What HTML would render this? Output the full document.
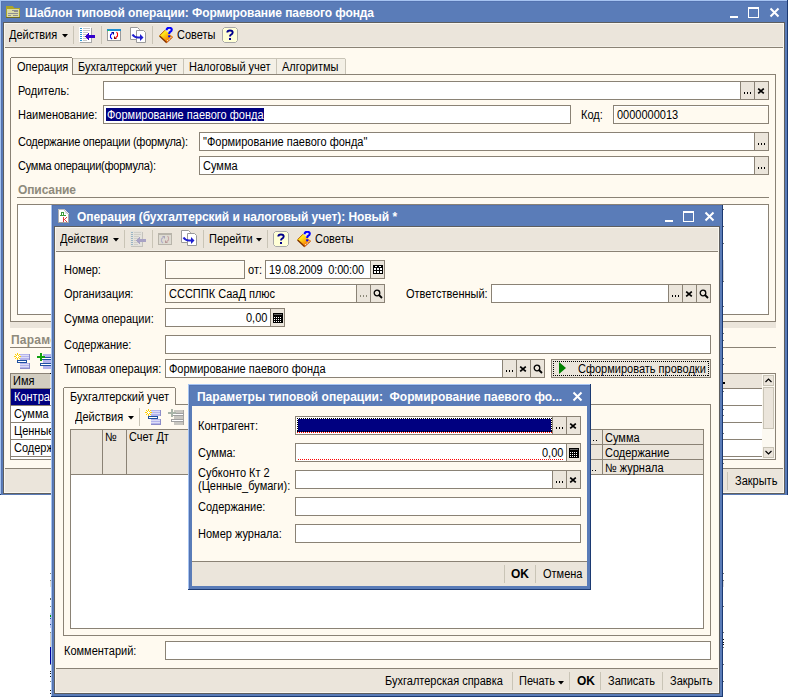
<!DOCTYPE html><html><head><meta charset="utf-8"><style>
html,body{margin:0;padding:0;background:#fff;}
#r{position:relative;width:788px;height:698px;overflow:hidden;background:#fff;font-family:"Liberation Sans",sans-serif;font-size:12px;color:#000}
.a{position:absolute;box-sizing:border-box}
.t{position:absolute;line-height:13px;white-space:nowrap;font-size:12px;transform:scaleX(0.917);transform-origin:0 0}
svg.a{display:block}
</style></head><body><div id="r">
<div class="a" style="left:0px;top:0px;width:788px;height:495px;background:#5a7cb8;"></div>
<div class="a" style="left:1px;top:1px;width:1px;height:494px;background:#5473b0;"></div>
<div class="a" style="left:1px;top:1px;width:787px;height:1px;background:#5473b0;"></div>
<div class="a" style="left:0px;top:0px;width:1px;height:495px;background:#a6c4f2;"></div>
<div class="a" style="left:0px;top:0px;width:788px;height:1px;background:#a6c4f2;"></div>
<div class="a" style="left:787px;top:0px;width:1px;height:495px;background:#1c3a72;"></div>
<div class="a" style="left:0px;top:494px;width:788px;height:1px;background:#1c3a72;"></div>
<div class="t" style="left:25px;top:7px;letter-spacing:-0.081px;font-weight:bold;transform:none;color:#fff;">Шаблон типовой операции: Формирование паевого фонда</div>
<svg class="a" style="left:6px;top:6px;shape-rendering:crispEdges" width="14" height="12" viewBox="0 0 14 12"><path d="M0 0 H6 L8 2 H14 V12 H0 Z" fill="#aca42a"/><rect x="1" y="3" width="12" height="8" fill="#dcdba6"/><rect x="6" y="4" width="6" height="1" fill="#8e8e92"/><rect x="8" y="5" width="4" height="1" fill="#8e8e92"/><rect x="2" y="7" width="10" height="1" fill="#8e8e92"/><rect x="2" y="9" width="3" height="1" fill="#8e8e92"/><rect x="7" y="9" width="5" height="1" fill="#8e8e92"/><rect x="0" y="11" width="14" height="1" fill="#6e6a20"/></svg>
<div class="a" style="left:730px;top:16px;width:8px;height:2px;background:#fff;"></div>
<div class="a" style="left:748px;top:7px;width:11px;height:2px;background:#fff;"></div>
<div class="a" style="left:748px;top:7px;width:1px;height:11px;background:#fff;"></div>
<div class="a" style="left:758px;top:7px;width:1px;height:11px;background:#fff;"></div>
<div class="a" style="left:748px;top:17px;width:11px;height:1px;background:#fff;"></div>
<svg class="a" style="left:769px;top:7px" width="11" height="11" viewBox="0 0 11 11"><path d="M1.5 1.5 L9.5 9.5 M9.5 1.5 L1.5 9.5" stroke="#fff" stroke-width="2"/></svg>
<div class="a" style="left:3px;top:22px;width:782px;height:472px;background:#5e5e5e;"></div>
<div class="a" style="left:4px;top:23px;width:780px;height:470px;background:#fffaf0;"></div>
<div class="a" style="left:4px;top:23px;width:780px;height:24px;background:#ebe5db;"></div>
<div class="a" style="left:4px;top:47px;width:780px;height:1px;background:#8a8275;"></div>
<div class="t" style="left:9px;top:29px;">Действия</div>
<svg class="a" style="left:62px;top:34px" width="6" height="4" viewBox="0 0 6 4"><path d="M0 0H6L3 3.5Z" fill="#000"/></svg>
<div class="a" style="left:73px;top:26px;width:1px;height:18px;background:#c9c4b6;"></div>
<div class="a" style="left:101px;top:26px;width:1px;height:18px;background:#c9c4b6;"></div>
<div class="a" style="left:152px;top:26px;width:1px;height:18px;background:#c9c4b6;"></div>
<div class="t" style="left:177px;top:29px;">Советы</div>
<svg class="a" style="left:79px;top:27px;shape-rendering:crispEdges" width="17" height="17" viewBox="0 0 17 17"><rect x="1" y="1" width="12" height="15" fill="#a8a8a8"/><rect x="0" y="0" width="12" height="15" fill="#ffffff"/><rect x="1" y="1" width="2" height="1" fill="#2a9ad8"/><rect x="4" y="1" width="7" height="1" fill="#c8c8c8"/><rect x="1" y="3" width="2" height="1" fill="#2a9ad8"/><rect x="4" y="3" width="7" height="1" fill="#c8c8c8"/><rect x="1" y="5" width="2" height="1" fill="#2a9ad8"/><rect x="4" y="5" width="5" height="1" fill="#c8c8c8"/><rect x="1" y="7" width="2" height="1" fill="#2a9ad8"/><rect x="4" y="7" width="4" height="1" fill="#c8c8c8"/><rect x="1" y="9" width="2" height="1" fill="#2a9ad8"/><rect x="4" y="9" width="4" height="1" fill="#c8c8c8"/><rect x="1" y="11" width="2" height="1" fill="#2a9ad8"/><rect x="4" y="11" width="4" height="1" fill="#c8c8c8"/><rect x="1" y="13" width="2" height="1" fill="#2a9ad8"/><rect x="4" y="13" width="4" height="1" fill="#c8c8c8"/><path d="M6 9.5 L10 6 V8 H16 V11 H10 V13 Z" fill="#3300cc"/></svg>
<svg class="a" style="left:107px;top:29px;" width="14" height="12" viewBox="0 0 14 12"><rect x="0.5" y="0.5" width="13" height="11" fill="#ffffff" stroke="#9a9a9a"/><rect x="0" y="0" width="14" height="2" fill="#1e8fd0"/><rect x="1" y="1" width="1" height="1" fill="#20e020"/><path d="M4 3 H7 V6 Z" fill="#000090"/><path d="M5 4.5 L3.5 6 V8.5 L5 10" stroke="#0000ff" stroke-width="1.1" fill="none"/><path d="M9.5 3 L10.5 4.5 V7 L9 8.5" stroke="#ff0000" stroke-width="1.1" fill="none"/><path d="M7 7 V10 H10 Z" fill="#900000"/></svg>
<svg class="a" style="left:130px;top:27px;" width="17" height="17" viewBox="0 0 17 17"><path d="M0.5 0.5 H7.5 L9.5 2.5 V12.5 H0.5 Z" fill="#fff" stroke="#9a9a9a"/><path d="M6.5 3.5 H13.5 L15.5 5.5 V15.5 H6.5 Z" fill="#fff" stroke="#9a9a9a"/><path d="M2.5 7.5 Q4.5 10.5 8 10.5 H11" stroke="#2020d0" stroke-width="2.2" fill="none"/><path d="M10 7 L13.5 10.5 L10 14 Z" fill="#2020d0"/></svg>
<svg class="a" style="left:159px;top:27px;" width="15" height="17" viewBox="0 0 15 17"><defs><linearGradient id="bk159" x1="0.2" y1="0.2" x2="0.8" y2="0.9"><stop offset="0" stop-color="#ffff20"/><stop offset="0.5" stop-color="#ffb010"/><stop offset="1" stop-color="#f06000"/></linearGradient></defs><path d="M6 3 L0 9 L7.5 16 L14 10 Z" fill="url(#bk159)"/><path d="M0.6 9 L7.5 15.4" stroke="#803000" stroke-width="1.4"/><path d="M0.6 8.6 L6 3.2" stroke="#c05000" stroke-width="1"/><path d="M8.3 14.2 L13 9.8" stroke="#fff" stroke-width="1.1" stroke-dasharray="1.2 1"/><path d="M13.6 10.2 L7.5 15.8" stroke="#b04000" stroke-width="0.8"/><path d="M7.6 3.2 Q7.6 0.8 10.2 0.8 Q12.8 0.8 12.8 2.8 Q12.8 4.2 11 5 Q10.2 5.4 10.2 7" stroke="#0000ff" stroke-width="2.1" fill="none"/><rect x="9.2" y="8.3" width="2.1" height="2" fill="#0000ff"/></svg>
<svg class="a" style="left:222px;top:27px;" width="16" height="16" viewBox="0 0 16 16"><path d="M2.5 0.5 H13.5 L15.5 2.5 V13.5 L13.5 15.5 H2.5 L0.5 13.5 V2.5 Z" fill="#ffffd6" stroke="#a8a8a8"/><path d="M5.3 5.5 Q5.3 3.5 8 3.5 Q10.7 3.5 10.7 5.5 Q10.7 7 8.8 7.8 Q8 8.2 8 9.5" stroke="#00008b" stroke-width="1.9" fill="none"/><rect x="7" y="11" width="2" height="2" fill="#00008b"/></svg>
<svg class="a" style="left:14px;top:353px;shape-rendering:crispEdges" width="16" height="16" viewBox="0 0 16 16"><rect x="6" y="1" width="10" height="6" fill="#b4b4ec"/><rect x="6" y="2" width="9" height="1" fill="#fff" opacity="0.55"/><rect x="6" y="4" width="9" height="1" fill="#fff" opacity="0.55"/><rect x="15" y="1" width="1" height="6" fill="#8c8cc8"/><rect x="3.5" y="7.5" width="9" height="2" fill="#fff" stroke="#2050a0"/><rect x="6" y="10" width="10" height="6" fill="#b4b4ec"/><rect x="6" y="11" width="9" height="1" fill="#fff" opacity="0.55"/><rect x="6" y="13" width="9" height="1" fill="#fff" opacity="0.55"/><rect x="15" y="10" width="1" height="6" fill="#8c8cc8"/><rect x="6" y="15" width="10" height="1" fill="#8c8cc8"/><path d="M3.5 0 V7 M0 3.5 H7 M1 1 L6 6 M6 1 L1 6" stroke="#ffd000" stroke-width="1.2"/><circle cx="3.5" cy="3.5" r="1.3" fill="#fff"/></svg>
<svg class="a" style="left:37px;top:353px;" width="14" height="16" viewBox="0 0 14 16"><rect x="6" y="1" width="10" height="15" fill="#b4b4ec"/><rect x="15" y="1" width="1" height="15" fill="#8c8cc8"/><rect x="3.5" y="4.5" width="12" height="2" fill="#fff" stroke="#2050a0"/><rect x="3.5" y="10.5" width="12" height="2" fill="#fff" stroke="#2050a0"/><path d="M4 0 V8 M0 4 H8" stroke="#10a010" stroke-width="2"/></svg>
<div class="a" style="left:72px;top:58px;width:274px;height:16px;background:#f4f0e6;"></div>
<div class="a" style="left:73px;top:58px;width:272px;height:1px;background:#c9c4b7;"></div>
<div class="a" style="left:183px;top:59px;width:1px;height:15px;background:#c9c4b7;"></div>
<div class="a" style="left:276px;top:59px;width:1px;height:15px;background:#c9c4b7;"></div>
<div class="a" style="left:345px;top:59px;width:1px;height:15px;background:#c9c4b7;"></div>
<div class="t" style="left:78px;top:61px;">Бухгалтерский учет</div>
<div class="t" style="left:189px;top:61px;">Налоговый учет</div>
<div class="t" style="left:282px;top:61px;">Алгоритмы</div>
<div class="a" style="left:10px;top:74px;width:766px;height:248px;background:#fffaf0;border:1px solid #8a8275;"></div>
<div class="a" style="left:10px;top:57px;width:63px;height:19px;background:#fffaf0;"></div>
<div class="a" style="left:10px;top:58px;width:1px;height:18px;background:#8a8275;"></div>
<div class="a" style="left:11px;top:57px;width:61px;height:1px;background:#8a8275;"></div>
<div class="a" style="left:72px;top:58px;width:1px;height:17px;background:#8a8275;"></div>
<div class="t" style="left:17px;top:61px;">Операция</div>
<div class="t" style="left:18px;top:85px;">Родитель:</div>
<div class="a" style="left:103px;top:81px;width:666px;height:19px;background:#ffffff;border:1px solid #8a8275;"></div>
<div class="a" style="left:755px;top:82px;width:13px;height:17px;background:#ebe5db;"></div>
<div class="a" style="left:754px;top:82px;width:1px;height:17px;background:#8a8275;"></div>
<svg class="a" style="left:757px;top:88px" width="8" height="6" viewBox="0 0 8 6"><path d="M1.2 0.6 L6.8 5.4 M6.8 0.6 L1.2 5.4" stroke="#000" stroke-width="1.7"/></svg>
<div class="a" style="left:741px;top:82px;width:13px;height:17px;background:#ebe5db;"></div>
<div class="a" style="left:740px;top:82px;width:1px;height:17px;background:#8a8275;"></div>
<div class="a" style="left:744px;top:92px;width:1px;height:2px;background:#000;"></div>
<div class="a" style="left:747px;top:92px;width:1px;height:2px;background:#000;"></div>
<div class="a" style="left:750px;top:92px;width:1px;height:2px;background:#000;"></div>
<div class="t" style="left:18px;top:109px;">Наименование:</div>
<div class="a" style="left:103px;top:105px;width:468px;height:19px;background:#ffffff;border:1px solid #8a8275;"></div>
<div class="a" style="left:106px;top:108px;width:158px;height:13px;background:#000080;"></div>
<div class="t" style="left:107px;top:109px;color:#fff;">Формирование паевого фонда</div>
<div class="t" style="left:581px;top:109px;">Код:</div>
<div class="a" style="left:613px;top:105px;width:156px;height:19px;background:#fffaf0;border:1px solid #8a8275;"></div>
<div class="t" style="left:617px;top:109px;">0000000013</div>
<div class="a" style="left:614px;top:106px;width:154px;height:1px;background:#fff;"></div>
<div class="a" style="left:614px;top:106px;width:1px;height:17px;background:#fff;"></div>
<div class="t" style="left:18px;top:136px;letter-spacing:-0.249px;">Содержание операции (формула):</div>
<div class="a" style="left:199px;top:132px;width:570px;height:19px;background:#ffffff;border:1px solid #8a8275;"></div>
<div class="a" style="left:755px;top:133px;width:13px;height:17px;background:#ebe5db;"></div>
<div class="a" style="left:754px;top:133px;width:1px;height:17px;background:#8a8275;"></div>
<div class="a" style="left:758px;top:143px;width:1px;height:2px;background:#000;"></div>
<div class="a" style="left:761px;top:143px;width:1px;height:2px;background:#000;"></div>
<div class="a" style="left:764px;top:143px;width:1px;height:2px;background:#000;"></div>
<div class="t" style="left:203px;top:136px;">"Формирование паевого фонда"</div>
<div class="t" style="left:18px;top:160px;letter-spacing:-0.276px;">Сумма операции(формула):</div>
<div class="a" style="left:199px;top:156px;width:570px;height:19px;background:#ffffff;border:1px solid #8a8275;"></div>
<div class="a" style="left:755px;top:157px;width:13px;height:17px;background:#ebe5db;"></div>
<div class="a" style="left:754px;top:157px;width:1px;height:17px;background:#8a8275;"></div>
<div class="a" style="left:758px;top:167px;width:1px;height:2px;background:#000;"></div>
<div class="a" style="left:761px;top:167px;width:1px;height:2px;background:#000;"></div>
<div class="a" style="left:764px;top:167px;width:1px;height:2px;background:#000;"></div>
<div class="t" style="left:203px;top:160px;">Сумма</div>
<div class="t" style="left:18px;top:184px;letter-spacing:-0.105px;font-weight:bold;transform:none;color:#8e8a7c;">Описание</div>
<div class="a" style="left:17px;top:197px;width:752px;height:1px;background:#8a8275;"></div>
<div class="a" style="left:17px;top:204px;width:752px;height:111px;background:#ffffff;border:1px solid #8a8275;"></div>
<div class="a" style="left:10px;top:322px;width:766px;height:6px;background:#ebe5db;"></div>
<div class="t" style="left:11px;top:334px;letter-spacing:0.232px;font-weight:bold;transform:none;color:#8e8a7c;">Параметры</div>
<div class="a" style="left:10px;top:347px;width:766px;height:1px;background:#8a8275;"></div>
<div class="a" style="left:10px;top:373px;width:766px;height:87px;background:#ffffff;border:1px solid #8a8275;"></div>
<div class="a" style="left:11px;top:374px;width:751px;height:14px;background:#ebe5db;"></div>
<div class="a" style="left:11px;top:374px;width:39px;height:14px;background:#d2cdc0;"></div>
<div class="a" style="left:11px;top:388px;width:751px;height:1px;background:#8a8275;"></div>
<div class="t" style="left:13px;top:375px;">Имя</div>
<div class="a" style="left:11px;top:389px;width:39px;height:16px;background:#000080;"></div>
<div class="a" style="left:50px;top:373px;width:1px;height:1px;background:#000;"></div>
<div class="t" style="left:14px;top:391px;color:#fff;">Контрагент</div>
<div class="a" style="left:11px;top:405px;width:751px;height:1px;background:#8a8275;"></div>
<div class="a" style="left:11px;top:422px;width:751px;height:1px;background:#8a8275;"></div>
<div class="a" style="left:11px;top:439px;width:751px;height:1px;background:#8a8275;"></div>
<div class="a" style="left:11px;top:456px;width:751px;height:1px;background:#8a8275;"></div>
<div class="t" style="left:14px;top:408px;">Сумма</div>
<div class="t" style="left:14px;top:425px;">Ценные_бумаги</div>
<div class="t" style="left:14px;top:442px;">Содержание</div>
<div class="a" style="left:762px;top:374px;width:13px;height:85px;background:#fcf9f1;"></div>
<div class="a" style="left:763px;top:375px;width:11px;height:11px;background:#ebe5db;border:1px solid #c9c4b6;"></div>
<div class="a" style="left:763px;top:387px;width:11px;height:42px;background:#ebe5db;border:1px solid #c9c4b6;"></div>
<div class="a" style="left:763px;top:447px;width:11px;height:11px;background:#ebe5db;border:1px solid #c9c4b6;"></div>
<svg class="a" style="left:764px;top:376px;" width="9" height="9" viewBox="0 0 9 9"><path d="M1.5 6 L4.5 3 L7.5 6" stroke="#000" stroke-width="1.2" fill="none"/></svg>
<svg class="a" style="left:764px;top:448px;" width="9" height="9" viewBox="0 0 9 9"><path d="M1.5 3 L4.5 6 L7.5 3" stroke="#000" stroke-width="1.2" fill="none"/></svg>
<div class="a" style="left:4px;top:468px;width:780px;height:1px;background:#8a8275;"></div>
<div class="a" style="left:4px;top:469px;width:780px;height:24px;background:#ebe5db;"></div>
<div class="a" style="left:4px;top:23px;width:780px;height:1px;background:#f9f6ee;"></div>
<div class="a" style="left:4px;top:23px;width:1px;height:470px;background:#f9f6ee;"></div>
<div class="a" style="left:783px;top:23px;width:1px;height:470px;background:#f9f6ee;"></div>
<div class="a" style="left:4px;top:492px;width:780px;height:1px;background:#f9f6ee;"></div>
<div class="a" style="left:5px;top:46px;width:778px;height:1px;background:#f2eee6;"></div>
<div class="a" style="left:1px;top:494px;width:786px;height:1px;background:#5a7cb8;"></div>
<div class="a" style="left:727px;top:472px;width:1px;height:18px;background:#c9c4b6;"></div>
<div class="t" style="left:735px;top:475px;">Закрыть</div>
<div class="a" style="left:51px;top:205px;width:672px;height:492px;background:#5a7cb8;"></div>
<div class="a" style="left:52px;top:206px;width:1px;height:491px;background:#5473b0;"></div>
<div class="a" style="left:52px;top:205px;width:671px;height:1px;background:#5473b0;"></div>
<div class="a" style="left:51px;top:205px;width:1px;height:492px;background:#a6c4f2;"></div>
<div class="a" style="left:722px;top:205px;width:1px;height:492px;background:#1c3a72;"></div>
<div class="a" style="left:51px;top:696px;width:672px;height:1px;background:#1c3a72;"></div>
<div class="t" style="left:77px;top:211px;letter-spacing:-0.067px;font-weight:bold;transform:none;color:#fff;">Операция (бухгалтерский и налоговый учет): Новый *</div>
<svg class="a" style="left:58px;top:209px;shape-rendering:crispEdges" width="11" height="14" viewBox="0 0 11 14"><rect x="0" y="0" width="11" height="14" fill="#fff"/><rect x="0" y="0" width="1" height="14" fill="#b0b0b0"/><rect x="0" y="13" width="11" height="1" fill="#a0a0a0"/><rect x="10" y="4" width="1" height="10" fill="#a8a8a8"/><rect x="0" y="0" width="7" height="1" fill="#c0c0c0"/><path d="M6.5 0 L11 4.5 V0 Z" fill="#5a7cb8"/><path d="M6.5 0 V4.5 H11 Z" fill="#e4e8f0"/><path d="M6.5 0.5 L10.5 4.5" stroke="#b8b8c0" stroke-width="0.8"/><rect x="3" y="3" width="3" height="1" fill="#3c9c3c"/><rect x="3" y="3" width="1" height="3" fill="#3c9c3c"/><rect x="5" y="3" width="1" height="3" fill="#3c9c3c"/><rect x="2" y="6" width="6" height="1" fill="#3c9c3c"/><rect x="5" y="8" width="1" height="5" fill="#e03c3c"/><rect x="6" y="10" width="1" height="1" fill="#e03c3c"/><rect x="7" y="9" width="1" height="1" fill="#e03c3c"/><rect x="8" y="8" width="1" height="1" fill="#e03c3c"/><rect x="7" y="11" width="1" height="1" fill="#e03c3c"/><rect x="8" y="12" width="1" height="1" fill="#e03c3c"/></svg>
<div class="a" style="left:665px;top:220px;width:8px;height:2px;background:#fff;"></div>
<div class="a" style="left:683px;top:211px;width:11px;height:2px;background:#fff;"></div>
<div class="a" style="left:683px;top:211px;width:1px;height:11px;background:#fff;"></div>
<div class="a" style="left:693px;top:211px;width:1px;height:11px;background:#fff;"></div>
<div class="a" style="left:683px;top:221px;width:11px;height:1px;background:#fff;"></div>
<svg class="a" style="left:704px;top:211px" width="11" height="11" viewBox="0 0 11 11"><path d="M1.5 1.5 L9.5 9.5 M9.5 1.5 L1.5 9.5" stroke="#fff" stroke-width="2"/></svg>
<div class="a" style="left:54px;top:226px;width:666px;height:468px;background:#5e5e5e;"></div>
<div class="a" style="left:55px;top:227px;width:664px;height:466px;background:#fffaf0;"></div>
<div class="a" style="left:55px;top:227px;width:664px;height:24px;background:#ebe5db;"></div>
<div class="a" style="left:55px;top:251px;width:664px;height:1px;background:#8a8275;"></div>
<div class="t" style="left:60px;top:233px;">Действия</div>
<svg class="a" style="left:113px;top:238px" width="6" height="4" viewBox="0 0 6 4"><path d="M0 0H6L3 3.5Z" fill="#000"/></svg>
<div class="a" style="left:124px;top:230px;width:1px;height:18px;background:#c9c4b6;"></div>
<div class="a" style="left:152px;top:230px;width:1px;height:18px;background:#c9c4b6;"></div>
<div class="a" style="left:203px;top:230px;width:1px;height:18px;background:#c9c4b6;"></div>
<div class="a" style="left:267px;top:230px;width:1px;height:18px;background:#c9c4b6;"></div>
<div class="t" style="left:209px;top:233px;">Перейти</div>
<svg class="a" style="left:256px;top:238px" width="6" height="4" viewBox="0 0 6 4"><path d="M0 0H6L3 3.5Z" fill="#000"/></svg>
<div class="t" style="left:315px;top:233px;">Советы</div>
<svg class="a" style="left:130px;top:231px;shape-rendering:crispEdges" width="17" height="17" viewBox="0 0 17 17"><rect x="1" y="1" width="12" height="15" fill="#c4c2bc"/><rect x="0" y="0" width="12" height="15" fill="#e4e2dc"/><rect x="1" y="1" width="2" height="1" fill="#9ab4c4"/><rect x="4" y="1" width="7" height="1" fill="#d0cec8"/><rect x="1" y="3" width="2" height="1" fill="#9ab4c4"/><rect x="4" y="3" width="7" height="1" fill="#d0cec8"/><rect x="1" y="5" width="2" height="1" fill="#9ab4c4"/><rect x="4" y="5" width="5" height="1" fill="#d0cec8"/><rect x="1" y="7" width="2" height="1" fill="#9ab4c4"/><rect x="4" y="7" width="4" height="1" fill="#d0cec8"/><rect x="1" y="9" width="2" height="1" fill="#9ab4c4"/><rect x="4" y="9" width="4" height="1" fill="#d0cec8"/><rect x="1" y="11" width="2" height="1" fill="#9ab4c4"/><rect x="4" y="11" width="4" height="1" fill="#d0cec8"/><rect x="1" y="13" width="2" height="1" fill="#9ab4c4"/><rect x="4" y="13" width="4" height="1" fill="#d0cec8"/><path d="M6 9.5 L10 6 V8 H16 V11 H10 V13 Z" fill="#a8a2c4"/></svg>
<svg class="a" style="left:158px;top:233px;" width="14" height="12" viewBox="0 0 14 12"><rect x="0.5" y="0.5" width="13" height="11" fill="#dedbd2" stroke="#b8b4aa"/><rect x="0" y="0" width="14" height="2" fill="#b8b4aa"/><path d="M4 3 H7 V6 Z" fill="#a8a4b8"/><path d="M5 4.5 L3.5 6 V8.5 L5 10" stroke="#b4b0c8" stroke-width="1.1" fill="none"/><path d="M9.5 3 L10.5 4.5 V7 L9 8.5" stroke="#c8a8a8" stroke-width="1.1" fill="none"/><path d="M7 7 V10 H10 Z" fill="#b89898"/></svg>
<svg class="a" style="left:181px;top:230px;" width="17" height="17" viewBox="0 0 17 17"><path d="M0.5 0.5 H7.5 L9.5 2.5 V12.5 H0.5 Z" fill="#fff" stroke="#9a9a9a"/><path d="M6.5 3.5 H13.5 L15.5 5.5 V15.5 H6.5 Z" fill="#fff" stroke="#9a9a9a"/><path d="M2.5 7.5 Q4.5 10.5 8 10.5 H11" stroke="#2020d0" stroke-width="2.2" fill="none"/><path d="M10 7 L13.5 10.5 L10 14 Z" fill="#2020d0"/></svg>
<svg class="a" style="left:273px;top:231px;" width="16" height="16" viewBox="0 0 16 16"><path d="M2.5 0.5 H13.5 L15.5 2.5 V13.5 L13.5 15.5 H2.5 L0.5 13.5 V2.5 Z" fill="#ffffd6" stroke="#a8a8a8"/><path d="M5.3 5.5 Q5.3 3.5 8 3.5 Q10.7 3.5 10.7 5.5 Q10.7 7 8.8 7.8 Q8 8.2 8 9.5" stroke="#00008b" stroke-width="1.9" fill="none"/><rect x="7" y="11" width="2" height="2" fill="#00008b"/></svg>
<svg class="a" style="left:297px;top:231px;" width="15" height="17" viewBox="0 0 15 17"><defs><linearGradient id="bk297" x1="0.2" y1="0.2" x2="0.8" y2="0.9"><stop offset="0" stop-color="#ffff20"/><stop offset="0.5" stop-color="#ffb010"/><stop offset="1" stop-color="#f06000"/></linearGradient></defs><path d="M6 3 L0 9 L7.5 16 L14 10 Z" fill="url(#bk297)"/><path d="M0.6 9 L7.5 15.4" stroke="#803000" stroke-width="1.4"/><path d="M0.6 8.6 L6 3.2" stroke="#c05000" stroke-width="1"/><path d="M8.3 14.2 L13 9.8" stroke="#fff" stroke-width="1.1" stroke-dasharray="1.2 1"/><path d="M13.6 10.2 L7.5 15.8" stroke="#b04000" stroke-width="0.8"/><path d="M7.6 3.2 Q7.6 0.8 10.2 0.8 Q12.8 0.8 12.8 2.8 Q12.8 4.2 11 5 Q10.2 5.4 10.2 7" stroke="#0000ff" stroke-width="2.1" fill="none"/><rect x="9.2" y="8.3" width="2.1" height="2" fill="#0000ff"/></svg>
<div class="t" style="left:64px;top:264px;">Номер:</div>
<div class="a" style="left:165px;top:260px;width:80px;height:19px;background:#fffaf0;border:1px solid #8a8275;"></div>
<div class="a" style="left:166px;top:261px;width:78px;height:1px;background:#fff;"></div>
<div class="a" style="left:166px;top:261px;width:1px;height:17px;background:#fff;"></div>
<div class="t" style="left:248px;top:264px;">от:</div>
<div class="a" style="left:265px;top:260px;width:120px;height:19px;background:#ffffff;border:1px solid #8a8275;"></div>
<div class="a" style="left:371px;top:261px;width:13px;height:17px;background:#ebe5db;"></div>
<div class="a" style="left:370px;top:261px;width:1px;height:17px;background:#8a8275;"></div>
<svg class="a" style="left:373px;top:265px" width="10" height="9" viewBox="0 0 10 9"><rect x="0" y="0" width="10" height="9" fill="#000"/><rect x="2" y="1" width="2" height="1" fill="#fff"/><rect x="6" y="1" width="2" height="1" fill="#fff"/><rect x="1" y="3" width="2" height="2" fill="#fff"/><rect x="1" y="6" width="2" height="2" fill="#fff"/><rect x="4" y="3" width="2" height="2" fill="#fff"/><rect x="4" y="6" width="2" height="2" fill="#fff"/><rect x="7" y="3" width="2" height="2" fill="#fff"/><rect x="7" y="6" width="2" height="2" fill="#fff"/></svg>
<div class="t" style="left:269px;top:264px;letter-spacing:-0.172px;">19.08.2009&nbsp; 0:00:00</div>
<div class="t" style="left:64px;top:288px;">Организация:</div>
<div class="a" style="left:165px;top:284px;width:220px;height:19px;background:#fffaf0;border:1px solid #8a8275;"></div>
<div class="a" style="left:371px;top:285px;width:13px;height:17px;background:#ebe5db;"></div>
<div class="a" style="left:370px;top:285px;width:1px;height:17px;background:#8a8275;"></div>
<svg class="a" style="left:373px;top:289px" width="10" height="10" viewBox="0 0 10 10"><circle cx="4" cy="4" r="2.8" fill="none" stroke="#000" stroke-width="1.3"/><path d="M6 6 L9 9" stroke="#000" stroke-width="1.8"/></svg>
<div class="a" style="left:357px;top:285px;width:13px;height:17px;background:#ebe5db;"></div>
<div class="a" style="left:356px;top:285px;width:1px;height:17px;background:#8a8275;"></div>
<div class="a" style="left:360px;top:295px;width:1px;height:2px;background:#8c8878;"></div>
<div class="a" style="left:363px;top:295px;width:1px;height:2px;background:#8c8878;"></div>
<div class="a" style="left:366px;top:295px;width:1px;height:2px;background:#8c8878;"></div>
<div class="t" style="left:169px;top:288px;">СССППК СааД плюс</div>
<div class="a" style="left:166px;top:285px;width:190px;height:1px;background:#fff;"></div>
<div class="a" style="left:166px;top:285px;width:1px;height:17px;background:#fff;"></div>
<div class="t" style="left:406px;top:288px;">Ответственный:</div>
<div class="a" style="left:491px;top:284px;width:220px;height:19px;background:#ffffff;border:1px solid #8a8275;"></div>
<div class="a" style="left:697px;top:285px;width:13px;height:17px;background:#ebe5db;"></div>
<div class="a" style="left:696px;top:285px;width:1px;height:17px;background:#8a8275;"></div>
<svg class="a" style="left:699px;top:289px" width="10" height="10" viewBox="0 0 10 10"><circle cx="4" cy="4" r="2.8" fill="none" stroke="#000" stroke-width="1.3"/><path d="M6 6 L9 9" stroke="#000" stroke-width="1.8"/></svg>
<div class="a" style="left:683px;top:285px;width:13px;height:17px;background:#ebe5db;"></div>
<div class="a" style="left:682px;top:285px;width:1px;height:17px;background:#8a8275;"></div>
<svg class="a" style="left:685px;top:291px" width="8" height="6" viewBox="0 0 8 6"><path d="M1.2 0.6 L6.8 5.4 M6.8 0.6 L1.2 5.4" stroke="#000" stroke-width="1.7"/></svg>
<div class="a" style="left:669px;top:285px;width:13px;height:17px;background:#ebe5db;"></div>
<div class="a" style="left:668px;top:285px;width:1px;height:17px;background:#8a8275;"></div>
<div class="a" style="left:672px;top:295px;width:1px;height:2px;background:#000;"></div>
<div class="a" style="left:675px;top:295px;width:1px;height:2px;background:#000;"></div>
<div class="a" style="left:678px;top:295px;width:1px;height:2px;background:#000;"></div>
<div class="t" style="left:64px;top:313px;">Сумма операции:</div>
<div class="a" style="left:165px;top:308px;width:120px;height:19px;background:#ffffff;border:1px solid #8a8275;"></div>
<div class="a" style="left:271px;top:309px;width:13px;height:17px;background:#ebe5db;"></div>
<div class="a" style="left:270px;top:309px;width:1px;height:17px;background:#8a8275;"></div>
<svg class="a" style="left:273px;top:313px;shape-rendering:crispEdges" width="10" height="10" viewBox="0 0 10 10"><rect x="0" y="0" width="10" height="10" fill="#000"/><rect x="1" y="1" width="8" height="1" fill="#606060"/><rect x="1" y="4" width="1" height="1" fill="#fff"/><rect x="1" y="6" width="1" height="1" fill="#fff"/><rect x="1" y="8" width="1" height="1" fill="#fff"/><rect x="3" y="4" width="1" height="1" fill="#fff"/><rect x="3" y="6" width="1" height="1" fill="#fff"/><rect x="3" y="8" width="1" height="1" fill="#fff"/><rect x="5" y="4" width="1" height="1" fill="#fff"/><rect x="5" y="6" width="1" height="1" fill="#fff"/><rect x="5" y="8" width="1" height="1" fill="#fff"/><rect x="7" y="4" width="1" height="1" fill="#fff"/><rect x="7" y="6" width="1" height="1" fill="#fff"/><rect x="7" y="8" width="1" height="1" fill="#fff"/></svg>
<div class="t" style="left:246px;top:312px;">0,00</div>
<div class="t" style="left:64px;top:339px;">Содержание:</div>
<div class="a" style="left:165px;top:335px;width:546px;height:19px;background:#ffffff;border:1px solid #8a8275;"></div>
<div class="t" style="left:64px;top:363px;">Типовая операция:</div>
<div class="a" style="left:165px;top:359px;width:380px;height:19px;background:#ffffff;border:1px solid #8a8275;"></div>
<div class="a" style="left:531px;top:360px;width:13px;height:17px;background:#ebe5db;"></div>
<div class="a" style="left:530px;top:360px;width:1px;height:17px;background:#8a8275;"></div>
<svg class="a" style="left:533px;top:364px" width="10" height="10" viewBox="0 0 10 10"><circle cx="4" cy="4" r="2.8" fill="none" stroke="#000" stroke-width="1.3"/><path d="M6 6 L9 9" stroke="#000" stroke-width="1.8"/></svg>
<div class="a" style="left:517px;top:360px;width:13px;height:17px;background:#ebe5db;"></div>
<div class="a" style="left:516px;top:360px;width:1px;height:17px;background:#8a8275;"></div>
<svg class="a" style="left:519px;top:366px" width="8" height="6" viewBox="0 0 8 6"><path d="M1.2 0.6 L6.8 5.4 M6.8 0.6 L1.2 5.4" stroke="#000" stroke-width="1.7"/></svg>
<div class="a" style="left:503px;top:360px;width:13px;height:17px;background:#ebe5db;"></div>
<div class="a" style="left:502px;top:360px;width:1px;height:17px;background:#8a8275;"></div>
<div class="a" style="left:506px;top:370px;width:1px;height:2px;background:#000;"></div>
<div class="a" style="left:509px;top:370px;width:1px;height:2px;background:#000;"></div>
<div class="a" style="left:512px;top:370px;width:1px;height:2px;background:#000;"></div>
<div class="t" style="left:169px;top:363px;">Формирование паевого фонда</div>
<div class="a" style="left:551px;top:359px;width:160px;height:19px;background:#ebe5db;border:1px solid #8a8275;"></div>
<div class="a" style="left:553px;top:361px;width:156px;height:1px;background:repeating-linear-gradient(90deg,#000 0 1px,transparent 1px 2px);"></div>
<div class="a" style="left:553px;top:375px;width:156px;height:1px;background:repeating-linear-gradient(90deg,#000 0 1px,transparent 1px 2px);"></div>
<div class="a" style="left:553px;top:361px;width:1px;height:15px;background:repeating-linear-gradient(180deg,#000 0 1px,transparent 1px 2px);"></div>
<div class="a" style="left:708px;top:361px;width:1px;height:15px;background:repeating-linear-gradient(180deg,#000 0 1px,transparent 1px 2px);"></div>
<svg class="a" style="left:559px;top:362px" width="7" height="12" viewBox="0 0 7 12"><path d="M0 0 L7 6 L0 12Z" fill="#008000"/></svg>
<div class="t" style="left:578px;top:363px;">Сформировать проводки</div>
<div class="a" style="left:63px;top:404px;width:648px;height:232px;background:#fffaf0;border:1px solid #8a8275;"></div>
<div class="a" style="left:64px;top:387px;width:112px;height:19px;background:#fffaf0;"></div>
<div class="a" style="left:63px;top:388px;width:1px;height:18px;background:#8a8275;"></div>
<div class="a" style="left:64px;top:387px;width:111px;height:1px;background:#8a8275;"></div>
<div class="a" style="left:175px;top:388px;width:1px;height:17px;background:#8a8275;"></div>
<div class="t" style="left:70px;top:391px;">Бухгалтерский учет</div>
<div class="t" style="left:75px;top:411px;">Действия</div>
<svg class="a" style="left:128px;top:416px" width="6" height="4" viewBox="0 0 6 4"><path d="M0 0H6L3 3.5Z" fill="#000"/></svg>
<div class="a" style="left:139px;top:408px;width:1px;height:18px;background:#c9c4b6;"></div>
<svg class="a" style="left:145px;top:409px;shape-rendering:crispEdges" width="16" height="16" viewBox="0 0 16 16"><rect x="6" y="1" width="10" height="6" fill="#b4b4ec"/><rect x="6" y="2" width="9" height="1" fill="#fff" opacity="0.55"/><rect x="6" y="4" width="9" height="1" fill="#fff" opacity="0.55"/><rect x="15" y="1" width="1" height="6" fill="#8c8cc8"/><rect x="3.5" y="7.5" width="9" height="2" fill="#fff" stroke="#2050a0"/><rect x="6" y="10" width="10" height="6" fill="#b4b4ec"/><rect x="6" y="11" width="9" height="1" fill="#fff" opacity="0.55"/><rect x="6" y="13" width="9" height="1" fill="#fff" opacity="0.55"/><rect x="15" y="10" width="1" height="6" fill="#8c8cc8"/><rect x="6" y="15" width="10" height="1" fill="#8c8cc8"/><path d="M3.5 0 V7 M0 3.5 H7 M1 1 L6 6 M6 1 L1 6" stroke="#ffd000" stroke-width="1.2"/><circle cx="3.5" cy="3.5" r="1.3" fill="#fff"/></svg>
<svg class="a" style="left:168px;top:409px;" width="16" height="16" viewBox="0 0 16 16"><rect x="6" y="1" width="10" height="15" fill="#c8c6c0"/><rect x="15" y="1" width="1" height="15" fill="#a8a6a0"/><rect x="3.5" y="4.5" width="12" height="2" fill="#fff" stroke="#a0a0a0"/><rect x="3.5" y="10.5" width="12" height="2" fill="#fff" stroke="#a0a0a0"/><path d="M4 0 V8 M0 4 H8" stroke="#a8b4a8" stroke-width="2"/></svg>
<div class="a" style="left:70px;top:429px;width:634px;height:200px;background:#ffffff;border:1px solid #8a8275;"></div>
<div class="a" style="left:71px;top:430px;width:632px;height:44px;background:#ebe5db;"></div>
<div class="a" style="left:71px;top:474px;width:632px;height:1px;background:#8a8275;"></div>
<div class="a" style="left:102px;top:430px;width:1px;height:44px;background:#8a8275;"></div>
<div class="a" style="left:126px;top:430px;width:1px;height:44px;background:#8a8275;"></div>
<div class="a" style="left:602px;top:430px;width:1px;height:44px;background:#8a8275;"></div>
<div class="a" style="left:590px;top:444px;width:113px;height:1px;background:#8a8275;"></div>
<div class="a" style="left:590px;top:459px;width:113px;height:1px;background:#8a8275;"></div>
<div class="t" style="left:105px;top:431px;">№</div>
<div class="t" style="left:129px;top:431px;">Счет Дт</div>
<div class="a" style="left:593px;top:440px;width:1px;height:1px;background:#000;"></div>
<div class="a" style="left:596px;top:440px;width:1px;height:1px;background:#000;"></div>
<div class="a" style="left:592px;top:470px;width:1px;height:1px;background:#000;"></div>
<div class="a" style="left:595px;top:470px;width:1px;height:1px;background:#000;"></div>
<div class="t" style="left:605px;top:432px;">Сумма</div>
<div class="t" style="left:605px;top:447px;">Содержание</div>
<div class="t" style="left:605px;top:462px;">№ журнала</div>
<div class="t" style="left:64px;top:645px;">Комментарий:</div>
<div class="a" style="left:165px;top:641px;width:546px;height:19px;background:#ffffff;border:1px solid #8a8275;"></div>
<div class="a" style="left:55px;top:668px;width:664px;height:1px;background:#8a8275;"></div>
<div class="a" style="left:55px;top:669px;width:664px;height:24px;background:#ebe5db;"></div>
<div class="a" style="left:55px;top:227px;width:664px;height:1px;background:#f9f6ee;"></div>
<div class="a" style="left:55px;top:227px;width:1px;height:466px;background:#f9f6ee;"></div>
<div class="a" style="left:718px;top:227px;width:1px;height:466px;background:#f9f6ee;"></div>
<div class="a" style="left:55px;top:692px;width:664px;height:1px;background:#f9f6ee;"></div>
<div class="a" style="left:56px;top:250px;width:662px;height:1px;background:#f2eee6;"></div>
<div class="t" style="left:385px;top:675px;">Бухгалтерская справка</div>
<div class="a" style="left:512px;top:672px;width:1px;height:18px;background:#c9c4b6;"></div>
<div class="t" style="left:519px;top:675px;">Печать</div>
<svg class="a" style="left:558px;top:681px" width="6" height="4" viewBox="0 0 6 4"><path d="M0 0H6L3 3.5Z" fill="#000"/></svg>
<div class="a" style="left:569px;top:672px;width:1px;height:18px;background:#c9c4b6;"></div>
<div class="t" style="left:577px;top:675px;font-weight:bold;transform:none;">OK</div>
<div class="a" style="left:600px;top:672px;width:1px;height:18px;background:#c9c4b6;"></div>
<div class="t" style="left:608px;top:675px;">Записать</div>
<div class="a" style="left:662px;top:672px;width:1px;height:18px;background:#c9c4b6;"></div>
<div class="t" style="left:670px;top:675px;">Закрыть</div>
<div class="a" style="left:188px;top:384px;width:403px;height:206px;background:#5a7cb8;"></div>
<div class="a" style="left:189px;top:385px;width:1px;height:205px;background:#5473b0;"></div>
<div class="a" style="left:189px;top:385px;width:402px;height:1px;background:#5473b0;"></div>
<div class="a" style="left:188px;top:384px;width:1px;height:206px;background:#a6c4f2;"></div>
<div class="a" style="left:188px;top:384px;width:403px;height:1px;background:#a6c4f2;"></div>
<div class="a" style="left:590px;top:384px;width:1px;height:206px;background:#1c3a72;"></div>
<div class="a" style="left:188px;top:589px;width:403px;height:1px;background:#1c3a72;"></div>
<div class="t" style="left:197px;top:391px;letter-spacing:-0.001px;font-weight:bold;transform:none;color:#fff;">Параметры типовой операции:&nbsp; Формирование паевого фо...</div>
<svg class="a" style="left:572px;top:391px" width="11" height="11" viewBox="0 0 11 11"><path d="M1.5 1.5 L9.5 9.5 M9.5 1.5 L1.5 9.5" stroke="#fff" stroke-width="2"/></svg>
<div class="a" style="left:192px;top:406px;width:395px;height:180px;background:#fffaf0;"></div>
<div class="t" style="left:198px;top:420px;">Контрагент:</div>
<div class="a" style="left:295px;top:416px;width:286px;height:19px;background:#ffffff;border:1px solid #8a8275;"></div>
<div class="a" style="left:567px;top:417px;width:13px;height:17px;background:#ebe5db;"></div>
<div class="a" style="left:566px;top:417px;width:1px;height:17px;background:#8a8275;"></div>
<svg class="a" style="left:569px;top:423px" width="8" height="6" viewBox="0 0 8 6"><path d="M1.2 0.6 L6.8 5.4 M6.8 0.6 L1.2 5.4" stroke="#000" stroke-width="1.7"/></svg>
<div class="a" style="left:553px;top:417px;width:13px;height:17px;background:#ebe5db;"></div>
<div class="a" style="left:552px;top:417px;width:1px;height:17px;background:#8a8275;"></div>
<div class="a" style="left:556px;top:427px;width:1px;height:2px;background:#000;"></div>
<div class="a" style="left:559px;top:427px;width:1px;height:2px;background:#000;"></div>
<div class="a" style="left:562px;top:427px;width:1px;height:2px;background:#000;"></div>
<div class="a" style="left:298px;top:419px;width:253px;height:13px;background:#000080;"></div>
<div class="a" style="left:297px;top:418px;width:255px;height:1px;background:repeating-linear-gradient(90deg,#000 0 1px,transparent 1px 2px);"></div>
<div class="a" style="left:297px;top:431px;width:255px;height:1px;background:repeating-linear-gradient(90deg,#000 0 1px,transparent 1px 2px);"></div>
<div class="a" style="left:297px;top:418px;width:1px;height:14px;background:repeating-linear-gradient(180deg,#000 0 1px,transparent 1px 2px);"></div>
<div class="a" style="left:551px;top:418px;width:1px;height:14px;background:repeating-linear-gradient(180deg,#000 0 1px,transparent 1px 2px);"></div>
<div class="a" style="left:297px;top:432px;width:255px;height:1px;background:repeating-linear-gradient(90deg,#ff0000 0 1px,transparent 1px 2px);"></div>
<div class="t" style="left:198px;top:447px;">Сумма:</div>
<div class="a" style="left:295px;top:443px;width:286px;height:19px;background:#ffffff;border:1px solid #8a8275;"></div>
<div class="a" style="left:567px;top:444px;width:13px;height:17px;background:#ebe5db;"></div>
<div class="a" style="left:566px;top:444px;width:1px;height:17px;background:#8a8275;"></div>
<svg class="a" style="left:569px;top:448px;shape-rendering:crispEdges" width="10" height="10" viewBox="0 0 10 10"><rect x="0" y="0" width="10" height="10" fill="#000"/><rect x="1" y="1" width="8" height="1" fill="#606060"/><rect x="1" y="4" width="1" height="1" fill="#fff"/><rect x="1" y="6" width="1" height="1" fill="#fff"/><rect x="1" y="8" width="1" height="1" fill="#fff"/><rect x="3" y="4" width="1" height="1" fill="#fff"/><rect x="3" y="6" width="1" height="1" fill="#fff"/><rect x="3" y="8" width="1" height="1" fill="#fff"/><rect x="5" y="4" width="1" height="1" fill="#fff"/><rect x="5" y="6" width="1" height="1" fill="#fff"/><rect x="5" y="8" width="1" height="1" fill="#fff"/><rect x="7" y="4" width="1" height="1" fill="#fff"/><rect x="7" y="6" width="1" height="1" fill="#fff"/><rect x="7" y="8" width="1" height="1" fill="#fff"/></svg>
<div class="t" style="left:542px;top:447px;">0,00</div>
<div class="a" style="left:298px;top:459px;width:265px;height:1px;background:repeating-linear-gradient(90deg,#ff0000 0 1px,transparent 1px 2px);"></div>
<div class="t" style="left:198px;top:467px;">Субконто Кт 2</div>
<div class="t" style="left:198px;top:480px;">(Ценные_бумаги):</div>
<div class="a" style="left:295px;top:470px;width:286px;height:19px;background:#ffffff;border:1px solid #8a8275;"></div>
<div class="a" style="left:567px;top:471px;width:13px;height:17px;background:#ebe5db;"></div>
<div class="a" style="left:566px;top:471px;width:1px;height:17px;background:#8a8275;"></div>
<svg class="a" style="left:569px;top:477px" width="8" height="6" viewBox="0 0 8 6"><path d="M1.2 0.6 L6.8 5.4 M6.8 0.6 L1.2 5.4" stroke="#000" stroke-width="1.7"/></svg>
<div class="a" style="left:553px;top:471px;width:13px;height:17px;background:#ebe5db;"></div>
<div class="a" style="left:552px;top:471px;width:1px;height:17px;background:#8a8275;"></div>
<div class="a" style="left:556px;top:481px;width:1px;height:2px;background:#000;"></div>
<div class="a" style="left:559px;top:481px;width:1px;height:2px;background:#000;"></div>
<div class="a" style="left:562px;top:481px;width:1px;height:2px;background:#000;"></div>
<div class="t" style="left:198px;top:501px;">Содержание:</div>
<div class="a" style="left:295px;top:497px;width:286px;height:19px;background:#ffffff;border:1px solid #8a8275;"></div>
<div class="t" style="left:198px;top:528px;">Номер журнала:</div>
<div class="a" style="left:295px;top:524px;width:286px;height:19px;background:#ffffff;border:1px solid #8a8275;"></div>
<div class="a" style="left:192px;top:561px;width:395px;height:1px;background:#8a8275;"></div>
<div class="a" style="left:192px;top:562px;width:395px;height:24px;background:#ebe5db;"></div>
<div class="a" style="left:504px;top:565px;width:1px;height:18px;background:#c9c4b6;"></div>
<div class="a" style="left:535px;top:565px;width:1px;height:18px;background:#c9c4b6;"></div>
<div class="t" style="left:511px;top:568px;font-weight:bold;transform:none;">OK</div>
<div class="t" style="left:543px;top:568px;">Отмена</div>
<div class="a" style="left:723px;top:209px;width:1px;height:1px;background:#707070;"></div>
<div class="a" style="left:723px;top:226px;width:1px;height:1px;background:#707070;"></div>
<div class="a" style="left:723px;top:243px;width:1px;height:1px;background:#707070;"></div>
<div class="a" style="left:723px;top:281px;width:1px;height:1px;background:#707070;"></div>
<div class="a" style="left:723px;top:306px;width:1px;height:1px;background:#707070;"></div>
<div class="a" style="left:723px;top:333px;width:1px;height:1px;background:#707070;"></div>
<div class="a" style="left:723px;top:340px;width:1px;height:1px;background:#707070;"></div>
<div class="a" style="left:723px;top:358px;width:1px;height:1px;background:#707070;"></div>
<div class="a" style="left:723px;top:364px;width:1px;height:1px;background:#707070;"></div>
<div class="a" style="left:723px;top:391px;width:1px;height:1px;background:#707070;"></div>
<div class="a" style="left:723px;top:409px;width:1px;height:1px;background:#707070;"></div>
<div class="a" style="left:723px;top:415px;width:1px;height:1px;background:#707070;"></div>
<div class="a" style="left:723px;top:433px;width:1px;height:1px;background:#707070;"></div>
<div class="a" style="left:723px;top:463px;width:1px;height:1px;background:#707070;"></div>
<div class="a" style="left:723px;top:573px;width:1px;height:1px;background:#707070;"></div>
<div class="a" style="left:723px;top:580px;width:1px;height:1px;background:#707070;"></div>
<div class="a" style="left:723px;top:606px;width:1px;height:1px;background:#707070;"></div>
<div class="a" style="left:723px;top:632px;width:1px;height:1px;background:#707070;"></div>
<div class="a" style="left:723px;top:647px;width:1px;height:1px;background:#707070;"></div>
<div class="a" style="left:723px;top:664px;width:1px;height:1px;background:#707070;"></div>
<div class="a" style="left:723px;top:681px;width:1px;height:1px;background:#707070;"></div>
<div class="a" style="left:723px;top:639px;width:1px;height:1px;background:#101010;"></div>
<div class="a" style="left:723px;top:642px;width:1px;height:1px;background:#101010;"></div>
<div class="a" style="left:723px;top:644px;width:1px;height:1px;background:#101010;"></div>
<div class="a" style="left:723px;top:260px;width:1px;height:21px;background:#d8d8d8;"></div>
<div class="a" style="left:723px;top:581px;width:1px;height:6px;background:#e0e0e0;"></div>
<div class="a" style="left:723px;top:382px;width:2px;height:2px;background:#000;"></div>
<div class="a" style="left:50px;top:573px;width:1px;height:1px;background:#808070;"></div>
<div class="a" style="left:50px;top:580px;width:1px;height:1px;background:#808070;"></div>
<div class="a" style="left:50px;top:606px;width:1px;height:1px;background:#808070;"></div>
<div class="a" style="left:50px;top:632px;width:1px;height:1px;background:#808070;"></div>
<div class="a" style="left:50px;top:664px;width:1px;height:1px;background:#808070;"></div>
<div class="a" style="left:50px;top:681px;width:1px;height:1px;background:#808070;"></div>
<div class="a" style="left:50px;top:598px;width:1px;height:2px;background:#707060;"></div>
<div class="a" style="left:50px;top:581px;width:1px;height:6px;background:#e8e0d0;"></div>
<div class="a" style="left:50px;top:633px;width:1px;height:14px;background:#d8d0c0;"></div>
<div class="a" style="left:50px;top:647px;width:1px;height:17px;background:#0000a0;"></div>
<div class="a" style="left:50px;top:613px;width:1px;height:15px;background:#c8c8f0;"></div>
<div class="a" style="left:50px;top:615px;width:1px;height:2px;background:#00a000;"></div>
<div class="a" style="left:50px;top:618px;width:1px;height:1px;background:#2050a0;"></div>
<div class="a" style="left:50px;top:624px;width:1px;height:1px;background:#2050a0;"></div>
<div class="a" style="left:50px;top:671px;width:1px;height:1px;background:#101010;"></div>
<div class="a" style="left:50px;top:673px;width:1px;height:1px;background:#101010;"></div>
<div class="a" style="left:50px;top:676px;width:1px;height:1px;background:#101010;"></div>
<div class="a" style="left:50px;top:690px;width:1px;height:1px;background:#101010;"></div>
<div class="a" style="left:50px;top:693px;width:1px;height:1px;background:#101010;"></div>
</div></body></html>
